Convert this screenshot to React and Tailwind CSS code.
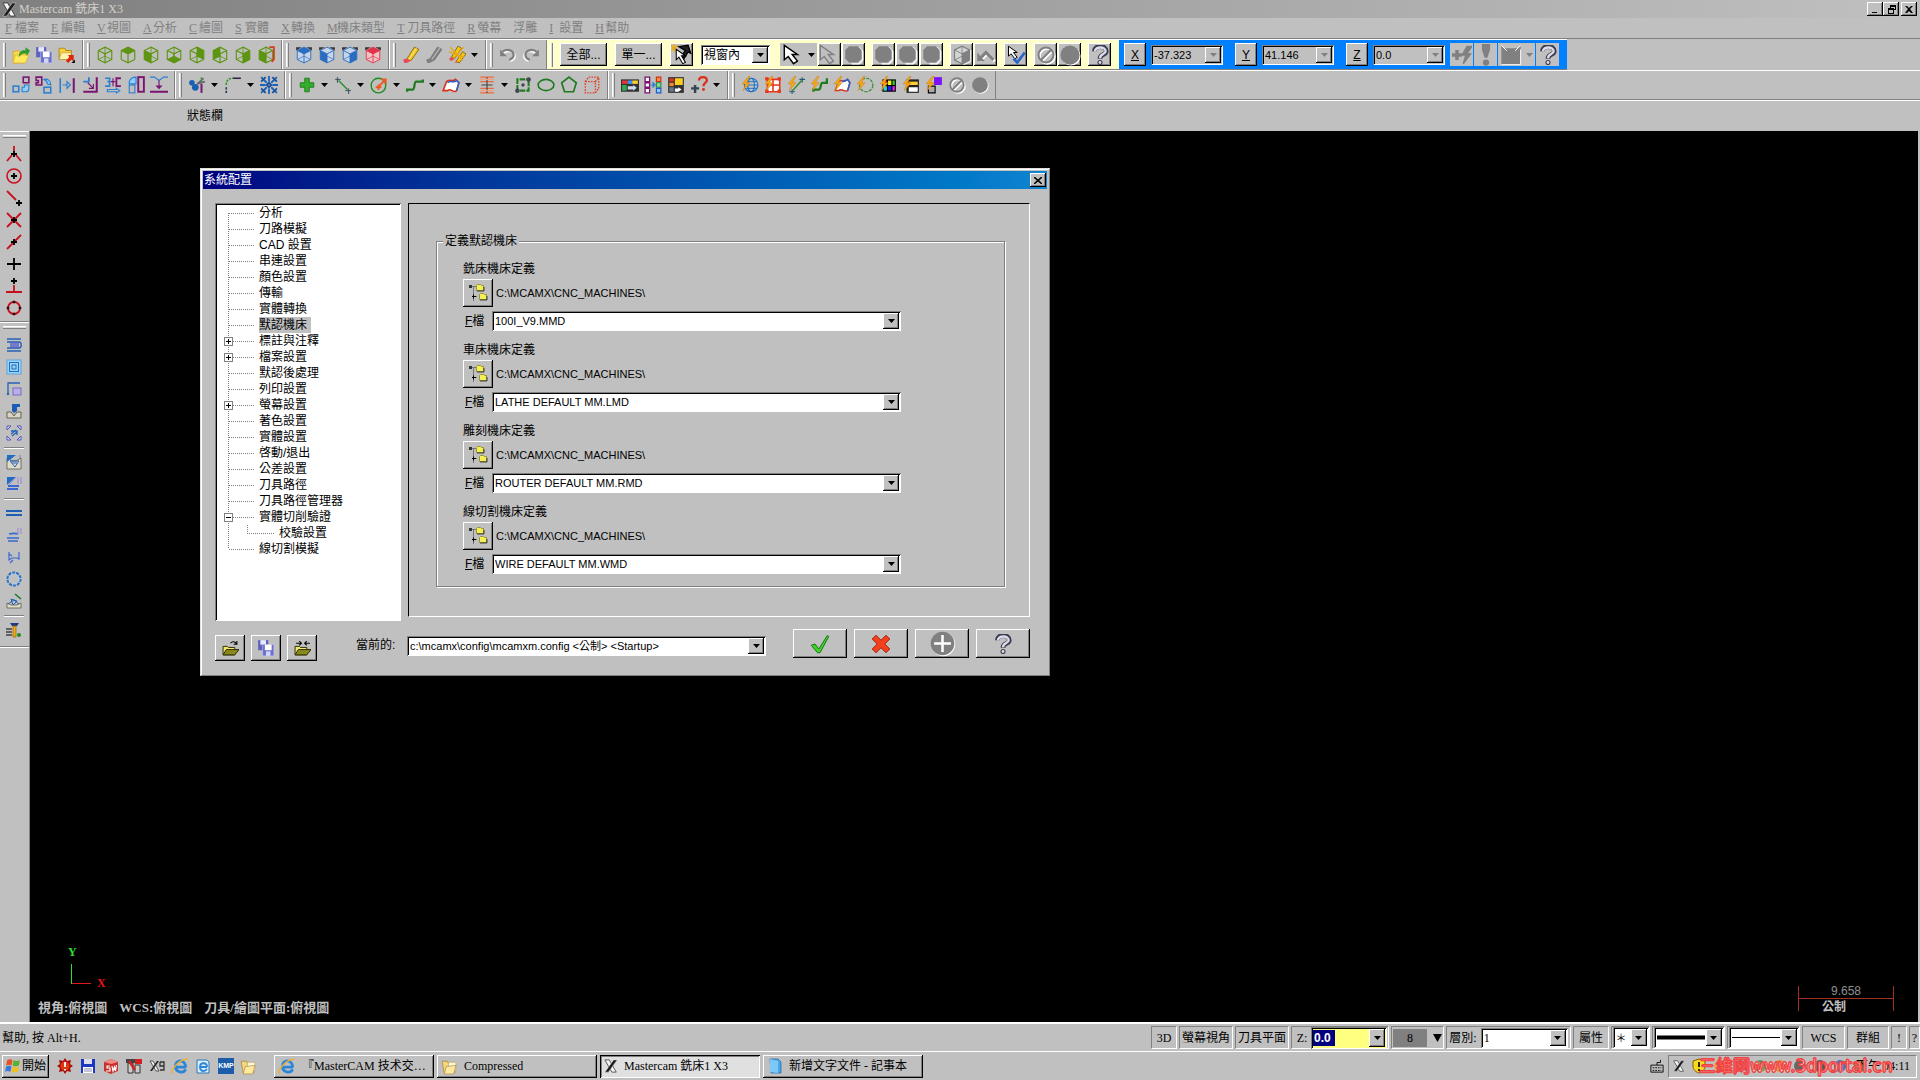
import React, { useState } from 'react';

const RAISED = 'bg-[#c0c0c0] shadow-[inset_-1px_-1px_#000,inset_1px_1px_#fff,inset_-2px_-2px_#808080]';
const SUNKEN = 'shadow-[inset_1px_1px_#808080,inset_-1px_-1px_#fff,inset_2px_2px_#000]';
const CELL = 'border border-t-[#808080] border-l-[#808080] border-r-white border-b-white';
const SANS = 'font-["Liberation_Sans","Noto_Sans_CJK_TC",sans-serif]';
const SERIF = 'font-["Liberation_Serif","Noto_Sans_CJK_TC",serif]';

const Ico = ({ size = 18, children }) => (
  <svg width={size} height={size} viewBox="0 0 16 16" fill="none" aria-hidden="true" className="shrink-0">
    {children}
  </svg>
);

const Arrow = ({ color = '#000' }) => (
  <svg width="7" height="4" viewBox="0 0 7 4" aria-hidden="true" className="shrink-0">
    <path d="M0 0h7L3.5 4z" fill={color} />
  </svg>
);

/* ---------- view cubes ---------- */
const FACES = {
  top: '8,1 14,4 8,7 2,4',
  left: '2,4 8,7 8,15 2,12',
  right: '14,4 14,12 8,15 8,7',
  bottom: '2,12 8,9 14,12 8,15',
  backRight: '8,1 14,4 14,12 8,9',
  backLeft: '8,1 2,4 2,12 8,9',
};

const Cube = ({ face, color = '#5d9410', extra }) => (
  <Ico>
    {face && <polygon points={FACES[face]} fill={color} />}
    <path d="M8 1l6 3v8l-6 3-6-3V4zM2 4l6 3 6-3M8 7v8" stroke={color} />
    {face !== 'top' && <path d="M8 1v8l-6 3M8 9l6 3" stroke={color} strokeWidth=".7" />}
    {extra && <path d="M11 1h4v11l-2 2" stroke="#d33c1c" strokeWidth="1.6" />}
  </Ico>
);

const SolidCube = ({ face, color, light }) => (
  <Ico>
    <path d="M1 1h5L1 4zM15 1h-5l5 3z" fill="#333" />
    <polygon points="8,1 14,4 14,12 8,15 2,12 2,4" fill={light} />
    <polygon points={FACES[face]} fill={color} />
    <path d="M8 1l6 3v8l-6 3-6-3V4zM2 4l6 3 6-3M8 7v8" stroke={color} strokeWidth=".8" />
    <path d="M8 9l-6 3M8 9l6 3" stroke={color} strokeWidth=".6" />
  </Ico>
);

/* ---------- file icons ---------- */
const OpenIcon = () => (
  <Ico>
    <path d="M1 5l5-1 1 2h6l-2 9H1z" fill="#f7d94a" stroke="#d9a520" strokeWidth=".7" />
    <path d="M3 8h12l-3 7H1z" fill="#ffe95c" stroke="#d9a520" strokeWidth=".5" />
    <path d="M6 10c0-5 3-7 6-6V1l4 3-3 5V7c-3-1-5 0-7 3z" fill="#2e9b2a" />
  </Ico>
);
const SaveIcon = () => (
  <Ico>
    <path d="M1 1h9v9H1z" fill="#5d62bd" /><path d="M3 1h5v4H3z" fill="#e8e8ff" />
    <path d="M5 5h10v10H5z" fill="#6a6fca" stroke="#c9cbf3" strokeWidth=".5" />
    <path d="M7 5h6v5H7z" fill="#fff" /><path d="M8 11h4v4H8z" fill="#d4d6f5" />
  </Ico>
);
const FolderRedIcon = () => (
  <Ico>
    <path d="M1 2h5l1 2h5v8H1z" fill="#f8d23a" stroke="#a77a12" strokeWidth=".7" />
    <path d="M3 6h9l-2 6H1z" fill="#fff3b0" stroke="#a77a12" strokeWidth=".4" />
    <path d="M9 8h5v6l-2-2-3 3-2-2 3-3z" fill="#e02412" /><path d="M15 12v3h-3z" fill="#000" />
  </Ico>
);
const FolderIcon = () => (
  <Ico size={17}>
    <path d="M1 3h5l1 2h6v9H3z" fill="#f4d77c" stroke="#a6843a" strokeWidth=".7" />
    <path d="M7 4h7v8H7z" fill="#fdf7d8" stroke="#b79a52" strokeWidth=".5" />
    <path d="M5 8l9-1-2 8H3z" fill="#ffe9a0" stroke="#a6843a" strokeWidth=".6" />
  </Ico>
);

/* ---------- pencils, undo ---------- */
const Pencil = ({ color = '#f3c518', tip = '#e84a5c', edge = '#7d5a00' }) => (
  <Ico><path d="M11 1l4 2-7 10-4-1z" fill={color} stroke={edge} strokeWidth=".7" /><path d="M13 2L6 12" stroke="#fff" strokeOpacity=".5" /><path d="M1 12l3-1 4 2-4 2H2z" fill={tip} /></Ico>
);
const PencilStar = () => (
  <Ico>
    <path d="M9 0l3 2-6 9-3-1zM13 5l3 2-6 8-3-1z" fill="#f3c518" stroke="#7d5a00" strokeWidth=".7" />
    <path d="M1 5l13 5M2 1l11 12M14 1L3 13" stroke="#e8a808" strokeWidth="1.2" /><path d="M1 11l2-1 3 2-4 1zM5 15l2-1h3z" fill="#e84a5c" />
  </Ico>
);
const UndoIcon = ({ flip }) => (
  <Ico>
    <g transform={flip ? 'matrix(-1 0 0 1 16 0)' : undefined}>
      <path d="M4 6c5-3 10-1 10 3 0 2-2 4-4 4" stroke="#fff" strokeWidth="2" />
      <path d="M3 5c5-3 10-1 10 3 0 2-2 4-4 4" stroke="#808080" strokeWidth="2" /><path d="M1 3v6h6z" fill="#808080" />
    </g>
  </Ico>
);

/* ---------- pointers and disabled shapes ---------- */
const Pointer = ({ fill = '#fff', stroke = '#000', size = 21 }) => (
  <Ico size={size}><path d="M1 1v11l3-2.500L8 15l3-2-4-5h4z" fill={fill} stroke={stroke} strokeWidth="1.100" /></Ico>
);
const DoublePointer = () => (
  <Ico size={21}>
    <path d="M6 2l7-1 2 6-2-1-3 5-2-2 3-4z" fill="#222" stroke="#000" />
    <path d="M0 1l5 5M0 5l5-4M2.500 0v6" stroke="#f0a800" />
    <path d="M4 4v8l2-2 3 5 2-1-3-5h3z" fill="#fff" stroke="#000" strokeWidth=".8" />
  </Ico>
);
const Blob = () => (
  <Ico size={20}>
    <path d="M5 2h7l3 3v7l-3 3H6" stroke="#fff" />
    <path d="M4 1h7l3 3v7l-3 3H4l-3-3V4z" fill="#808080" />
  </Ico>
);
const Disc = ({ size = 20 }) => (
  <Ico size={size}><circle cx="8.7" cy="8.7" r="7" fill="#fff" /><circle cx="8" cy="8" r="7" fill="#808080" /></Ico>
);
const NoIcon = ({ size = 18 }) => (
  <Ico size={size}>
    <g stroke="#fff" strokeWidth="1.6"><circle cx="9" cy="9" r="6" /><path d="M5 13l8-8" /></g>
    <g stroke="#808080" strokeWidth="1.6"><circle cx="8" cy="8" r="6" /><path d="M4 12l8-8" /></g>
  </Ico>
);
const GrayCube = () => (
  <Ico size={20}>
    <path d="M8 1l6 3v8l-6 3-6-3V4z" fill="#d4d4d4" stroke="#808080" /><path d="M8 7l6-3v8l-6 3z" fill="#808080" />
    <path d="M2 4l6 3 6-3M8 1v14M2 12l6-3" stroke="#808080" strokeWidth=".7" /><path d="M15 4v9l-6 3" stroke="#fff" strokeWidth=".7" />
  </Ico>
);
const BentArrow = () => (
  <Ico size={20}>
    <path d="M3 13l6-6 6 6" stroke="#fff" strokeWidth="2.5" /><path d="M2 12l6-6 6 6" stroke="#808080" strokeWidth="2.5" /><path d="M1 6v7h6z" fill="#808080" />
  </Ico>
);
const CheckPointer = () => (
  <Ico size={20}>
    <path d="M2 1v8l2-2 3 4 2-1-3-4h3z" fill="#fff" stroke="#000" strokeWidth=".8" />
    <path d="M6 11l3 3 6-8" stroke="#2a64c8" strokeWidth="2.2" />
  </Ico>
);
const HelpIcon = () => (
  <Ico size={20}>
    <path d="M3.500 5c0-5 9.500-5 9.500 0 0 3-5 2-5 6" stroke="#3c3c50" strokeWidth="3.800" />
    <path d="M4 5c.5-4 8.500-4 8.500 0 0 2.500-4.500 2-4.500 5.500" stroke="#dcdcec" strokeWidth="1.900" />
    <circle cx="8" cy="14" r="1.600" fill="#dcdcec" stroke="#3c3c50" strokeWidth=".9" />
  </Ico>
);

/* ---------- transform toolbar ---------- */
const B = '#2c7fd0';
const P = '#7a1470';
const X1 = () => <Ico><rect x="10" y="1" width="5" height="5" stroke={P} strokeWidth="1.4" /><rect x="1" y="9" width="5" height="5" stroke={B} strokeWidth="1.4" /><path d="M9 14v-4h2V8h4v3c0 2-1 3-3 3z" fill="#8fd0ff" stroke={B} /></Ico>;
const X2 = () => <Ico><path d="M1 1h5v7H1V6h2V4H1z" stroke={P} strokeWidth="1.4" /><path d="M8 3c3-1 6 1 6 5l-3-1c0-2-1-3-3-4z" fill="#8fd0ff" stroke={B} /><rect x="8" y="10" width="6" height="5" stroke={B} strokeWidth="1.4" /></Ico>;
const X3 = () => <Ico><path d="M2 2v13" stroke={B} strokeWidth="1.4" /><path d="M14 2v13" stroke={P} strokeWidth="1.8" /><path d="M4 8h4M8 5v6l3-3z" stroke={B} /></Ico>;
const X4 = () => <Ico><path d="M2 5h5V1" stroke={B} strokeWidth="1.6" /><path d="M14 1v13H2" stroke={P} strokeWidth="1.8" /><path d="M6 6l5 5M11 7v4H7" stroke={P} /></Ico>;
const X5 = () => <Ico><path d="M1 2h4v7H1M3 5h2" stroke={B} strokeWidth="1.4" /><path d="M15 2h-4v7h4" stroke={P} strokeWidth="1.6" /><path d="M8 2v7M6 5h4" stroke={P} /><path d="M3 12h8v-1l3 2-3 2v-1H3z" stroke={B} /></Ico>;
const X6 = () => <Ico><path d="M2 5c1-3 3-4 6-4v6H2z" stroke={B} fill="#8fd0ff" /><rect x="2" y="8" width="5" height="7" stroke={B} /><rect x="10" y="1" width="5" height="13" stroke={P} strokeWidth="1.7" /></Ico>;
const X7 = () => <Ico><path d="M0 1h4l4 3 4-3h4" stroke={B} /><path d="M8 4v7M6 9l2 2 2-2z" stroke={P} fill={P} /><path d="M0 14h16" stroke={P} strokeWidth="1.8" /></Ico>;

const TrimIcon = () => <Ico><path d="M8 7l6-5M8 7l7-2" stroke="#667" strokeWidth="1.4" /><circle cx="3.500" cy="6" r="2.500" fill="#1c5fb0" /><circle cx="6.500" cy="10" r="3" fill="#1c5fb0" /><path d="M12 7v8" stroke={P} strokeWidth="1.8" /><path d="M12 1v4" stroke="#2c9a20" strokeDasharray="2 1" strokeWidth="1.4" /></Ico>;
const FilletIcon = () => <Ico><path d="M2 15V9" stroke="#235" strokeWidth="1.4" strokeDasharray="2 1" /><path d="M2 8c0-4 2-6 6-6" stroke="#2c9a20" strokeWidth="1.4" strokeDasharray="2 1" /><path d="M8 2h7" stroke="#3a2050" strokeWidth="1.4" /></Ico>;
const BurstIcon = () => <Ico><path d="M1 1l5 5M15 1l-5 5M1 15l5-5M15 15l-5-5M8 0v5M8 11v5M0 8h5M11 8h5" stroke="#1763b8" strokeWidth="1.6" /><path d="M1 5l4-4M11 1l4 4M1 11l4 4M11 15l4-4M6 8l2-2 2 2-2 2z" stroke="#1a4f98" strokeWidth="1.6" /></Ico>;

/* ---------- sketcher ---------- */
const PlusIcon = () => <Ico><path d="M6 2h4v4h4v4h-4v4H6v-4H2V6h4z" fill="#35ad2c" stroke="#1b7a18" strokeWidth=".8" /></Ico>;
const LineIcon = () => <Ico><path d="M4 4l8 8" stroke="#2a8c2a" strokeWidth="1.3" /><path d="M1 3h5M3 1v5M10 13h5M13 11v5" stroke="#345" strokeWidth=".8" /></Ico>;
const CircleIcon = () => <Ico><circle cx="7.500" cy="8.500" r="6.500" stroke="#1f8a1f" strokeWidth="1.2" /><path d="M5 10h5M7.500 7.500v5M8 9l5-5M10 3h4v4" stroke="#ee5a1c" strokeWidth="1.6" /></Ico>;
const SplineIcon = () => <Ico><path d="M1 14v-2h5c2 0 1-7 3-7h6V3" stroke="#1f7a1f" strokeWidth="2" /></Ico>;
const SurfaceIcon = () => <Ico><path d="M1 13l3-8c3-3 5 1 8-2l3 3-2 7c-3 3-5-3-8 0z" fill="#fff" stroke="#d8311c" strokeWidth="1.4" /><path d="M5 6c3-3 5 1 8-2l2 2-2 7" stroke="#2c62c8" strokeWidth="1.4" /></Ico>;
const DraftIcon = () => <Ico><path d="M2 1h12M2 5h12M2 11h12M2 15h12" stroke="#ee6a3a" strokeWidth="1.3" /><path d="M8 1v14M3 8h10" stroke="#444" strokeWidth="1" /><path d="M2 3h12M2 13h12" stroke="#f5a080" /></Ico>;
const RectIcon = () => <Ico><path d="M3 13V3h9M13 4v9H5" stroke="#1f7a1f" strokeWidth="1.8" strokeDasharray="5 1" /><circle cx="3" cy="13" r="2" fill="#445" /><circle cx="13" cy="3" r="2" fill="#445" /><circle cx="8" cy="8" r="1.500" fill="#445" /></Ico>;
const EllipseIcon = () => <Ico><ellipse cx="8" cy="8" rx="7" ry="5" stroke="#1f7a1f" strokeWidth="1.4" /></Ico>;
const PolyIcon = () => <Ico><path d="M8 1l6.500 5-2.500 8H4L1.500 6z" stroke="#1f7a1f" strokeWidth="1.5" /></Ico>;
const BoxIcon = () => <Ico><path d="M2 5h9v10H2zM2 5l3-4h9v10l-3 4M11 5l3-4" stroke="#e2452a" strokeWidth="1.2" strokeDasharray="1.5 1" /></Ico>;

/* ---------- attribute and quick mask toolbars ---------- */
const Bolt = () => <path d="M7 0L1 7h3l-2 6 6-7H5l3-6z" fill="#f6a81c" stroke="#c97800" strokeWidth=".4" />;
const Palette1 = () => <Ico><path d="M0 3h16v11H0z" fill="#333" /><path d="M1 4h5v3H1z" fill="#e33" /><path d="M6 4h4v3H6z" fill="#39f" /><path d="M10 4h5v3h-5z" fill="#fc3" /><path d="M1 8h4v5H1z" fill="#3a5" /><path d="M6 9h5V8l3 2.500-3 2.500v-1H6z" fill="#cde" /></Ico>;
const Palette2 = () => <Ico><path d="M1 1h4v4H1zM1 6h4v4H1zM1 11h4v4H1z" fill="#fff" stroke={P} strokeWidth="1.2" /><path d="M11 1h4v4h-4z" fill="#f84" stroke="#c31" /><path d="M11 6h4v4h-4z" fill="#8d8" stroke="#285" /><path d="M11 11h4v4h-4z" fill="#8cf" stroke="#25c" /><path d="M6 8h3M8 6l2 2-2 2z" stroke={B} /></Ico>;
const Palette3 = () => <Ico><path d="M1 1h14v14H1z" fill="#333" /><path d="M2 2h4v3H2z" fill="#d32" /><path d="M7 2h7v6H7z" fill="#fc2" /><path d="M2 6h4v3H2z" fill="#e83" /><path d="M2 10h4v4H2z" fill="#678" /><path d="M7 11h3v-1l3 2-3 2H7z" fill="#fff" /></Ico>;
const QueryIcon = () => <Ico><path d="M1 11h7M4.500 8v7" stroke="#345" strokeWidth="2.2" /><path d="M8 4c0-4 7-4 7 0 0 2-3 2-3 5" stroke="#dc2d18" strokeWidth="2" /><circle cx="12" cy="12" r="1.300" fill="#dc2d18" /></Ico>;
const GlobeIcon = () => <Ico><circle cx="9" cy="8" r="6" stroke="#1b72c8" /><ellipse cx="9" cy="8" rx="3" ry="6" stroke="#1b72c8" /><path d="M3 8h12M4 5h10M4 11h10" stroke="#1b72c8" strokeWidth=".8" /><Bolt /></Ico>;
const GridIcon = () => <Ico><path d="M3 3h11v11H3z" fill="#fff" /><path d="M3 3h11v11H3zM8 3v11M3 8h11" stroke="#e8351c" strokeWidth="1.4" /><path d="M1 1h3v3H1zM12 1h3v3h-3zM1 12h3v3H1zM12 12h3v3h-3z" fill="#e8351c" /><Bolt /></Ico>;
const QLine = () => <Ico><path d="M5 13l8-9" stroke="#2a8c2a" strokeWidth="1.3" /><path d="M11 3h5M13.500 1v5M2 14h5M4.500 12v4" stroke="#257" strokeWidth=".9" /><Bolt /></Ico>;
const QSpline = () => <Ico><path d="M3 14v-2h5c2 0 1-6 3-6h4V2" stroke="#1f7a1f" strokeWidth="2" /><Bolt /></Ico>;
const QSurface = () => <Ico><path d="M2 13l3-8c3-2 5 1 8-2l2 3-2 7c-3 2-5-3-8 0z" fill="#fff" stroke="#d8311c" strokeWidth="1.3" /><path d="M8 5c2 0 3 0 5-2l2 3-2 7" stroke="#2c62c8" strokeWidth="1.4" /><Bolt /></Ico>;
const QCircle = () => <Ico><circle cx="9" cy="8" r="6" stroke="#2a8c2a" strokeDasharray="3 1" /><Bolt /></Ico>;
const QColor = () => <Ico><path d="M3 3h12v11H3z" fill="#000" /><path d="M4 4h3v4H4z" fill="#e22" /><path d="M8 4h3v4H8z" fill="#ee2" /><path d="M12 4h2v4h-2z" fill="#3c3" /><path d="M4 9h3v4H4z" fill="#2dd" /><path d="M8 9h3v4H8z" fill="#22e" /><path d="M12 9h2v4h-2z" fill="#e2e" /><Bolt /></Ico>;
const QLevel = () => <Ico><path d="M4 3h11v12H4z" fill="#222" /><path d="M6 5h8v3H6z" fill="#fc3" /><path d="M6 10h8v4H6z" fill="#fff" /><Bolt /></Ico>;
const QSquares = () => <Ico><path d="M8 1h7v7H8z" fill="#7a12f5" /><path d="M3 9h6v6H3z" fill="#aaa" stroke="#000" /><Bolt /></Ico>;

/* ---------- left bars ---------- */
const R = '#c8101c';
const Dot = ({ x = 8, y = 8 }) => <path d={`M${x - 3} ${y}h6M${x} ${y - 3}v6`} stroke="#000" strokeWidth="1.8" />;
const SNAPS = [
  ['原點', <><path d="M8 0v5M6 9l-5 6M10 9l5 6" stroke={R} strokeWidth="1.800" /><Dot /></>],
  ['圓心', <><circle cx="8" cy="8" r="7" stroke={R} strokeWidth="1.600" /><Dot /></>],
  ['端點', <><path d="M1 1l9 9" stroke={R} strokeWidth="1.800" /><Dot x={13} y={13} /></>],
  ['交點', <><path d="M1 1l14 14M15 1L1 15" stroke={R} strokeWidth="1.800" /><Dot /></>],
  ['中點', <><path d="M15 1L1 15" stroke={R} strokeWidth="1.800" /><Dot /></>],
  ['點', <path d="M8 2v12M1 8h14" stroke="#000" strokeWidth="1.800" />],
  ['垂直', <><path d="M8 7v7M0 14h16" stroke={R} strokeWidth="1.800" /><Dot y={3} /></>],
  ['四等分點', <><circle cx="8" cy="8" r="6" stroke={R} strokeWidth="1.800" /><path d="M8 .500v3M8 12.500v3M.500 8h3M12.500 8h3M6.500 2h3M6.500 14h3M2 6.500v3M14 6.500v3" stroke="#000" /></>],
];

const PATHS_A = [
  ['外形', <><path d="M1 2h14M1 14h14M1 5h12c3 0 3 6 0 6H1" stroke="#2462b8" strokeWidth="1.400" /><path d="M4 5h9v6H4z" fill="#5560c8" opacity=".700" /></>],
  ['挖槽', <><rect x="1" y="1" width="14" height="14" fill="#9ad4f8" stroke="#5aa4e0" /><rect x="3.500" y="3.500" width="9" height="9" stroke="#1c6cc0" /><rect x="6" y="6" width="4" height="4" stroke="#1c6cc0" /></>],
  ['面銑', <><path d="M2 13V2h12" stroke="#2462b8" strokeWidth="1.300" /><circle cx="2" cy="13" r="1.200" fill="#2462b8" /><rect x="7" y="7" width="8" height="7" fill="#b9aee8" stroke="#7a6cc0" /></>],
  ['鑽孔', <><path d="M6 1h8v3h-3v4L8 10 6 8z" fill="#1c5cb4" /><path d="M1 9h4l3 4 3-4h4v6H1z" fill="#d8d4c8" stroke="#66604c" /></>],
  ['陣列', <><path d="M1 1h4L1 5zM15 1v4l-4-4zM1 15v-4l4 4zM15 15h-4l4-4z" stroke="#5a54b8" fill="#cfe0ff" /><path d="M5 9l5-4M6 11l5-4M5 6h6v4" stroke="#2462b8" strokeWidth="1.300" /></>],
];
const PATHS_B = [
  ['曲面粗加工', <><path d="M1 4l5 3h4l5-3v11H1z" fill="#e0dccc" stroke="#5c5844" strokeWidth=".800" /><path d="M1 1h9L1 8z" fill="#1f6cc4" /><path d="M4 7h9l-4 6zM6 9h5" stroke="#2462b8" /><path d="M14 1v3" stroke="#8c78d0" /></>],
  ['曲面精加工', <><path d="M1 1h9L1 9z" fill="#1f6cc4" /><path d="M2 10h11M1 13h11" stroke="#3a68d0" strokeWidth="1.800" /><path d="M10 1L3 9M12 1v7M15 1v7" stroke="#9a84d8" /></>],
];
const PATHS_C = [
  ['平行', <path d="M0 6h16M0 10h16" stroke="#1b5fb4" strokeWidth="1.800" />],
  ['流線', <><path d="M3 7c4-1 6-1 9 0M1 11h12M2 14h10" stroke="#3a68d0" strokeWidth="1.700" /><path d="M12 1v6M15 1v6" stroke="#9a84d8" /></>],
  ['直紋', <path d="M3 3v8l3-2h5l2 1V3M3 5l3 2M4 14l3-3" stroke="#3a68d0" strokeWidth="1.200" />],
  ['全圓', <><circle cx="8" cy="8" r="6.500" stroke="#2f74c8" strokeWidth="2.200" strokeDasharray="3 1" /><circle cx="8" cy="8" r="5" stroke="#b4d4f4" strokeDasharray="2 2" /></>],
  ['五軸', <><path d="M1 10l4 2h6l4-2v5H1z" fill="#e0dccc" stroke="#5c5844" strokeWidth=".800" /><path d="M5 6l6 2-4 4zM2 11l6-4 5 4" stroke="#2462b8" /><path d="M9 1l6 5" stroke="#157a2a" strokeWidth="1.600" /></>],
];
const PATHS_D = [
  ['管理', <><path d="M4 1h9l-2 3H6z" fill="#223a80" /><path d="M7 4h3v11H7z" fill="#f0a818" stroke="#8a5c00" strokeWidth=".600" /><path d="M0 7h6M0 10h6M0 13h6" stroke="#000" strokeWidth="1.200" /><circle cx="13" cy="13" r="2" fill="#208a20" /></>],
];

const MENUS = [
  ['F', '檔案'], ['E', '編輯'], ['V', '視圖'], ['A', '分析'], ['C', '繪圖'], ['S', '實體'], ['X', '轉換'],
  ['M', '機床類型'], ['T', '刀具路徑'], ['R', '螢幕'], ['', '浮雕'], ['I', '設置'], ['H', '幫助'],
];

const TREE = [
  { label: '分析' }, { label: '刀路模擬' }, { label: 'CAD 設置' }, { label: '串連設置' }, { label: '顏色設置' },
  { label: '傳輸' }, { label: '實體轉換' }, { label: '默認機床' }, { label: '標註與注釋', box: '+' },
  { label: '檔案設置', box: '+' }, { label: '默認後處理' }, { label: '列印設置' }, { label: '螢幕設置', box: '+' },
  { label: '著色設置' }, { label: '實體設置' }, { label: '啓動/退出' }, { label: '公差設置' }, { label: '刀具路徑' },
  { label: '刀具路徑管理器' }, { label: '實體切削驗證', box: '-' }, { label: '校驗設置', child: true }, { label: '線切割模擬' },
];

const MACHINES = [
  { id: 'mill', title: '銑床機床定義', file: '100I_V9.MMD' },
  { id: 'lathe', title: '車床機床定義', file: 'LATHE DEFAULT MM.LMD' },
  { id: 'router', title: '雕刻機床定義', file: 'ROUTER DEFAULT MM.RMD' },
  { id: 'wire', title: '線切割機床定義', file: 'WIRE DEFAULT MM.WMD' },
];

/* ---------- toolbar parts ---------- */
const Handle = () => <span className="ml-[3px] mr-[3px] h-6 w-[3px] shrink-0 border-l border-r border-l-white border-r-[#808080] bg-[#dcdcdc]" />;

const Bar = ({ first, children }) => (
  <div className={`flex shrink-0 items-center border-r border-r-[#808080] pr-1 ${first ? '' : 'border-l border-l-white'}`}>
    <Handle />
    {children}
  </div>
);

const Tool = ({ label, drop, children }) => (
  <>
    <button type="button" aria-label={label} className="flex h-6 w-[23px] shrink-0 items-center justify-center">{children}</button>
    {drop && (
      <button type="button" aria-label={`${label} 選項`} className="flex h-6 w-[13px] shrink-0 items-center justify-center"><Arrow /></button>
    )}
  </>
);

const Push = ({ label, className = 'h-[23px] w-[23px]', children }) => (
  <button type="button" aria-label={label} className={`flex shrink-0 items-center justify-center ${RAISED} ${className}`}>{children}</button>
);

const Combo = ({ id, label, value, className = '', textClass = 'text-[11px] bg-white', arrow = '#000' }) => (
  <div className={`flex min-w-0 items-stretch p-[2px] ${SUNKEN} ${className}`}>
    <select id={id} aria-label={label} defaultValue={value} className={`min-w-0 flex-1 appearance-none overflow-hidden pl-px outline-none ${textClass}`}>
      <option>{value}</option>
    </select>
    <span className={`flex w-4 shrink-0 items-center justify-center ${RAISED}`}><Arrow color={arrow} /></span>
  </div>
);

const AxisField = ({ axis, value }) => (
  <div className="flex items-center gap-[5px]">
    <button type="button" className={`h-[23px] w-[22px] text-[12px] underline ${RAISED}`}>{axis}</button>
    <Combo label={axis} value={value} className="h-5 w-[72px] bg-[#c0c0c0]" textClass="text-[11px] bg-[#c0c0c0]" arrow="#808080" />
  </div>
);

const SideTools = ({ items }) => items.map(([label, art]) => (
  <button key={label} type="button" aria-label={label} className="flex h-[22px] w-7 items-center justify-center"><Ico size={16}>{art}</Ico></button>
));

const SideRule = () => <div className="mt-[3px] mb-[2px] ml-1 h-[2px] w-5 border-t border-b border-t-[#808080] border-b-white" />;
const SideHandle = () => <div className="mt-[3px] mb-[5px] ml-[3px] h-[3px] w-[23px] border-t border-b border-t-white border-b-[#808080] bg-[#dcdcdc]" />;

/* ---------- dialog ---------- */
const Branch = ({ item, first, last }) => (
  <svg width={item.child ? 62 : 42} height="16" aria-hidden="true" className="shrink-0">
    <g stroke="#808080" strokeDasharray="1 1">
      <path d={first ? 'M11.500 8v8' : last ? 'M11.500 0v8' : 'M11.500 0v16'} />
      {item.child ? <path d="M30.500 0v8M30 8.500h27" /> : <path d="M12 8.500h26" />}
    </g>
    {item.box && (
      <>
        <rect x="7.500" y="4.500" width="8" height="8" fill="#fff" stroke="#808080" />
        <path d={item.box === '+' ? 'M9 8.500h5M11.500 6v5' : 'M9 8.500h5'} stroke="#000" />
      </>
    )}
  </svg>
);

const TreeButtonIcon = () => (
  <svg width="20" height="20" viewBox="0 0 20 20" fill="none" aria-hidden="true">
    <path d="M3 3.500h5M5.500 4v14M5 13.500h4" stroke="#777" />
    <path d="M1 2h3v3H1z" fill="#333" /><path d="M4 13.500h4M5.500 11.500v4" stroke="#000" />
    <path d="M8.500 2.500l1-1h3l1 1h2v5h-7zM11.500 11.500l1-1h3l1 1h2v5h-7z" fill="#f4ee58" stroke="#8a8420" strokeWidth=".800" />
    <path d="M9 8h7V4M12 17h7v-4" stroke="#222" strokeWidth=".800" />
  </svg>
);

const DarkFolder = ({ merge }) => (
  <Ico size={17}>
    <path d="M1 6h4l1 1h6v7H1z" fill="#f2e96a" stroke="#2a2a00" strokeWidth=".900" />
    <path d="M4 9h12l-4 5H1z" fill="#8a8a1c" stroke="#2a2a00" strokeWidth=".900" />
    {merge ? <path d="M2 3h5M5 1l2 2-2 2M15 3h-5M12 1l-2 2 2 2" stroke="#000" /> : <path d="M8 3c2-2 4-2 6 1M14 1v3h-3" stroke="#000" />}
  </Ico>
);

const BigButton = ({ label, children }) => (
  <button type="button" aria-label={label} className={`flex h-[29px] w-[54px] items-center justify-center ${RAISED}`}>{children}</button>
);

const ConfigDialog = () => {
  const [selected, setSelected] = useState('默認機床');
  return (
    <section role="dialog" aria-label="系統配置" className={`absolute top-[37px] left-[170px] w-[850px] bg-[#c0c0c0] p-[3px] text-[12px] leading-4 text-black shadow-[inset_1px_1px_#dfdfdf,inset_-1px_-1px_#808080,inset_2px_2px_#fff] ${SANS}`}>
      <header className="flex h-[18px] items-center justify-between bg-linear-to-r from-[#000080] to-[#1084d0] pr-px pl-px text-white">
        <h1>系統配置</h1>
        <button type="button" aria-label="關閉" className={`flex h-[14px] w-4 items-center justify-center ${RAISED}`}>
          <svg width="8" height="7" viewBox="0 0 8 7" aria-hidden="true"><path d="M0 0l8 7M8 0L0 7" stroke="#000" strokeWidth="1.600" /></svg>
        </button>
      </header>

      <div className="pt-[14px] pr-[17px] pb-3 pl-3">
        <div className="flex items-start gap-[7px]">
          <ul className={`h-[418px] w-[186px] shrink-0 bg-white p-[2px] ${SUNKEN}`}>
            {TREE.map((item, i) => (
              <li key={item.label} className="flex h-4 items-center">
                <Branch item={item} first={i === 0} last={i === TREE.length - 1} />
                <button
                  type="button"
                  onClick={() => setSelected(item.label)}
                  className={`h-4 whitespace-nowrap ${selected === item.label ? 'bg-[#c0c0c0] pr-1' : ''}`}
                >
                  {item.label}
                </button>
              </li>
            ))}
          </ul>

          <div className="h-[414px] flex-1 border border-t-black border-l-black border-r-white border-b-white pt-[29px] pr-6 pl-[27px]">
            <fieldset className="border border-[#808080] pt-3 pr-[103px] pb-3 pl-[26px] shadow-[1px_1px_#fff,inset_1px_1px_#fff]">
              <legend className="-ml-[20px] bg-[#c0c0c0] px-[2px]">定義默認機床</legend>
              <div className="flex flex-col gap-[11px]">
                {MACHINES.map((m) => (
                  <div key={m.id}>
                    <p>{m.title}</p>
                    <div className="mt-[2px] flex items-center gap-[3px]">
                      <button type="button" aria-label={`${m.title} 瀏覽`} className={`flex h-7 w-[30px] items-center justify-center ${RAISED}`}>
                        <TreeButtonIcon />
                      </button>
                      <span className="text-[11px]">C:\MCAMX\CNC_MACHINES\</span>
                    </div>
                    <div className="mt-1 flex items-center">
                      <label htmlFor={m.id} className="w-[29px] pl-[2px] whitespace-nowrap"><u>F</u>檔</label>
                      <Combo id={m.id} value={m.file} className="h-5 flex-1 bg-white" />
                    </div>
                  </div>
                ))}
              </div>
            </fieldset>
          </div>
        </div>

        <footer className="mt-2 flex items-start">
          <div className="mt-[6px] flex gap-[6px]">
            <Push label="開啟" className="h-[26px] w-[30px]"><DarkFolder /></Push>
            <Push label="儲存" className="h-[26px] w-[30px]"><SaveIcon /></Push>
            <Push label="合併" className="h-[26px] w-[30px]"><DarkFolder merge /></Push>
          </div>
          <label htmlFor="current" className="mt-2 ml-[39px] w-[51px]">當前的:</label>
          <Combo id="current" value="c:\mcamx\config\mcamxm.config <公制> <Startup>" className="mt-[7px] h-5 w-[359px] bg-white" />
          <div className="ml-auto flex gap-[7px]">
            <BigButton label="確定"><Ico size={20}><path d="M1 9l3-1 3 4 7-11 1 1-7 13H6z" fill="#3fd02c" stroke="#167a10" strokeWidth=".800" /></Ico></BigButton>
            <BigButton label="取消"><Ico size={20}><path d="M4 1l4 4 4-4 3 3-4 4 4 4-3 3-4-4-4 4-3-3 4-4-4-4z" fill="#f2401c" stroke="#a81c08" strokeWidth=".800" /></Ico></BigButton>
            <BigButton label="套用"><Ico size={27}><circle cx="8.500" cy="8.500" r="7" fill="#fff" /><circle cx="8" cy="8" r="7" fill="#808080" /><path d="M8 3v10M3 8h10" stroke="#fff" strokeWidth="1.500" /></Ico></BigButton>
            <BigButton label="說明"><HelpIcon /></BigButton>
          </div>
        </footer>
      </div>
    </section>
  );
};

/* ---------- taskbar ---------- */
const XLogo = ({ size = 18 }) => (
  <Ico size={size}><path d="M1 1h5l8 14H9z" fill="#f4f4f4" stroke="#222" strokeWidth=".800" /><path d="M11 1h4L5 15H1z" fill="#1c1c1c" stroke="#ddd" strokeWidth=".500" /></Ico>
);
const IeIcon = () => (
  <Ico><path d="M13.500 9H4.500M13 9c0-7-9-7-9-1s7 7 9 3" stroke="#2c86d8" strokeWidth="2.600" /><path d="M1 15C-1 11 9 1 15 2" stroke="#f0b030" strokeWidth="1.300" /></Ico>
);
const QUICK = [
  ['警示', <><path d="M8 0l2 3 4-1-1 4 3 2-3 2 1 4-4-1-2 3-2-3-4 1 1-4-3-2 3-2-1-4 4 1z" fill="#a80c0c" /><circle cx="8" cy="8" r="4.500" fill="#e03810" /><path d="M8 4v5M8 11v1.500" stroke="#fff" strokeWidth="1.800" /></>],
  ['磁碟', <><path d="M1 1h14v14H1z" fill="#1c38c0" /><path d="M4 1h8v5H4z" fill="#dde" /><path d="M3 9h10v6H3z" fill="#fff" /><path d="M4 11h8M4 13h8" stroke="#88a" /></>],
  ['SolidWorks', <><path d="M1 4l7-3 7 3v9l-7 3-7-3z" fill="#c8302c" /><path d="M1 4l7-3 7 3-7 2z" fill="#f08c84" /><path d="M7 8H4v2h3v3H3M9 8l1 5 1.500-4 1 4 1-6" stroke="#fff" strokeWidth="1.200" /></>],
  ['量測', <><path d="M0 1h16v4H0z" fill="#444" /><path d="M9 1h7v5H9z" fill="#d02020" /><path d="M2 5h5v10H2zM9 7h5v8H9z" fill="#ccc" stroke="#333" /><path d="M3 3l6 9" stroke="#d02020" strokeWidth="2.400" /></>],
  ['X9', <><path d="M1 3h3l6 10H7z" fill="#eee" stroke="#222" strokeWidth=".700" /><path d="M8 3h2L3 13H1z" fill="#222" /><path d="M11 4h4v8h-4M11 4v4h4" stroke="#333" strokeWidth="1.300" /></>],
];

const TaskButton = ({ active, icon, children }) => (
  <button
    type="button"
    className={`flex h-[23px] w-[160px] items-center gap-[6px] pl-1 text-[12px] whitespace-nowrap ${active ? 'bg-[#e0e0e0] shadow-[inset_1px_1px_#000,inset_-1px_-1px_#fff,inset_2px_2px_#808080]' : RAISED}`}
  >
    {icon}
    <span className="truncate">{children}</span>
  </button>
);

const TRAY_DOTS = ['#f0a030', '#d04060', '#30a040', '#f08020', '#505050', '#404040', '#3060c0', '#60a030'];

const Cell = ({ className = '', children }) => (
  <div className={`flex h-[23px] shrink-0 items-center justify-center whitespace-nowrap ${CELL} ${className}`}>{children}</div>
);

const App = () => (
  <div className={`flex min-h-screen flex-col overflow-hidden bg-[#c0c0c0] text-[12px] leading-4 text-black ${SERIF}`}>
    <header className="flex h-[18px] items-center justify-between bg-linear-to-r from-[#808080] to-[#c0c0c0] pr-[3px] pl-[2px]">
      <div className="flex items-center gap-[2px] text-[12px] text-[#d4d0c8]"><XLogo size={15} />Mastercam 銑床1 X3</div>
      <div className="flex">
        {['M1 7h5v1H1z', 'M3 0h6v5H7v4H1V3h2zM4 2v1h3v1h1V2zM2 5v3h4V5z', 'M0 1h2l2 2 2-2h2L5 4l3 4H6L4 6 2 8H0l3-4z'].map((d, i) => (
          <button key={d} type="button" aria-label={['最小化', '還原', '關閉'][i]} className={`flex h-[14px] w-4 items-center justify-center ${RAISED} ${i === 2 ? 'ml-[2px]' : ''}`}>
            <svg width="9" height="9" aria-hidden="true"><path d={d} fillRule="evenodd" /></svg>
          </button>
        ))}
      </div>
    </header>

    <nav className="flex h-5 items-center gap-3 pl-[5px] text-[#808080]">
      {MENUS.map(([key, label]) => (
        <button key={label} type="button" className="flex whitespace-nowrap">
          {key && <span className="w-[10px] text-left underline">{key}</span>}
          {label}
        </button>
      ))}
    </nav>

    <div className="flex h-8 border-t border-[#808080]">
      <div className="flex border-t border-b border-t-white border-b-[#808080]">
        <Bar first><Tool label="開啟"><OpenIcon /></Tool><Tool label="儲存"><SaveIcon /></Tool><Tool label="轉換檔案"><FolderRedIcon /></Tool></Bar>
        <Bar>
          <Tool label="等角視圖"><Cube /></Tool><Tool label="俯視圖"><Cube face="top" /></Tool><Tool label="前視圖"><Cube face="left" /></Tool>
          <Tool label="底視圖"><Cube face="bottom" /></Tool><Tool label="後視圖"><Cube face="backRight" /></Tool><Tool label="左視圖"><Cube face="backLeft" /></Tool>
          <Tool label="右視圖"><Cube face="right" /></Tool><Tool label="旋轉視圖"><Cube face="left" extra /></Tool>
        </Bar>
        <Bar>
          <Tool label="平面 俯"><SolidCube face="top" color="#2a6cc0" light="#c6d4e8" /></Tool><Tool label="平面 前"><SolidCube face="left" color="#2a6cc0" light="#c6d4e8" /></Tool>
          <Tool label="平面 右"><SolidCube face="right" color="#2a6cc0" light="#c6d4e8" /></Tool><Tool label="平面 自訂"><SolidCube face="top" color="#e0344c" light="#f0c4c4" /></Tool>
        </Bar>
        <Bar><Tool label="刪除"><Pencil /></Tool><Tool label="恢復刪除"><Pencil color="#808080" tip="#808080" edge="#707070" /></Tool><Tool label="刪除重複" drop><PencilStar /></Tool></Bar>
        <Bar><Tool label="復原"><UndoIcon /></Tool><Tool label="重做"><UndoIcon flip /></Tool></Bar>

        <div className="flex shrink-0 items-center bg-[#ffffcc] pr-2">
          <Handle />
          <div className={`ml-1 flex items-center gap-2 ${SANS}`}>
            <button type="button" className={`h-[23px] w-[47px] ${RAISED}`}>全部...</button>
            <button type="button" className={`h-[23px] w-[47px] ${RAISED}`}>單一...</button>
            <Push label="驗證選取"><DoublePointer /></Push>
            <Combo label="選取方式" value="視窗內" className="h-5 w-[69px] bg-white" textClass="text-[12px] bg-white" />
            <div className="ml-[2px] flex gap-px">
              <button type="button" aria-label="選取" className="flex h-[23px] w-[37px] items-center justify-center gap-1 bg-[#c0c0c0]"><Pointer /><Arrow /></button>
              <Push label="選取實體"><Pointer fill="#c0c0c0" stroke="#808080" /></Push>
              <Push label="實體"><Blob /></Push>
            </div>
            <div className="-ml-px flex gap-px"><Push label="邊界"><Blob /></Push><Push label="面"><Blob /></Push><Push label="主體"><Blob /></Push></div>
            <div className="-ml-px flex gap-px"><Push label="背面"><GrayCube /></Push><Push label="上一個"><BentArrow /></Push></div>
            <div className="-ml-px flex"><Push label="確認選取"><CheckPointer /></Push></div>
            <div className="-ml-px flex gap-px"><Push label="取消選取"><NoIcon size={20} /></Push><Push label="結束選取"><Disc size={22} /></Push></div>
            <div className="-ml-px flex"><Push label="選取說明"><HelpIcon /></Push></div>
          </div>
        </div>

        <div className={`flex shrink-0 items-center bg-[#0080ff] pr-2 pl-[5px] ${SANS}`}>
          <div className="flex gap-3">
            <AxisField axis="X" value="-37.323" />
            <AxisField axis="Y" value="41.146" />
            <AxisField axis="Z" value="0.0" />
          </div>
          <div className="ml-[5px] flex gap-px">
            <button type="button" aria-label="快速繪點" className="flex h-[23px] w-[23px] items-center justify-center bg-[#c0c0c0]"><Ico size={20}><path d="M0 8h8M4 4v8" stroke="#808080" strokeWidth="2.800" /><path d="M12 1L8 8h3l-2 7 6-8h-3l4-6z" fill="#808080" stroke="#808080" /></Ico></button>
            <button type="button" aria-label="更新" className="flex h-[23px] w-[23px] items-center justify-center bg-[#c0c0c0]"><Ico size={22}><path d="M5 0h6v4L9 10H7L5 4z" fill="#808080" /><circle cx="8" cy="13.500" r="2.300" fill="#808080" /></Ico></button>
            <button type="button" aria-label="設定" className="flex h-[23px] w-[37px] items-center justify-center gap-1 bg-[#c0c0c0]"><Ico size={22}><path d="M1 1l2 2h10l2-2v14H1z" fill="#808080" /><path d="M1 1l4 4M15 1l-4 4M15 4v11H1" stroke="#fff" strokeWidth=".700" /></Ico><Arrow color="#808080" /></button>
            <button type="button" aria-label="座標說明" className="flex h-[23px] w-[23px] items-center justify-center bg-[#c0c0c0]"><HelpIcon /></button>
          </div>
        </div>
      </div>
    </div>

    <div className="flex h-[30px] border-t border-b border-t-white border-b-[#808080]">
      <Bar first>
        <Tool label="平移"><X1 /></Tool><Tool label="旋轉"><X2 /></Tool><Tool label="鏡像"><X3 /></Tool><Tool label="補正"><X4 /></Tool>
        <Tool label="投影"><X5 /></Tool><Tool label="比例"><X6 /></Tool><Tool label="纏繞"><X7 /></Tool>
      </Bar>
      <Bar><Tool label="修剪" drop><TrimIcon /></Tool><Tool label="倒圓角" drop><FilletIcon /></Tool><Tool label="打斷"><BurstIcon /></Tool></Bar>
      <Bar>
        <Tool label="繪點" drop><PlusIcon /></Tool><Tool label="直線" drop><LineIcon /></Tool><Tool label="圓弧" drop><CircleIcon /></Tool>
        <Tool label="曲線" drop><SplineIcon /></Tool><Tool label="曲面" drop><SurfaceIcon /></Tool><Tool label="標註" drop><DraftIcon /></Tool>
        <Tool label="矩形"><RectIcon /></Tool><Tool label="橢圓"><EllipseIcon /></Tool><Tool label="多邊形"><PolyIcon /></Tool><Tool label="邊界盒"><BoxIcon /></Tool>
      </Bar>
      <Bar><Tool label="屬性"><Palette1 /></Tool><Tool label="層別"><Palette2 /></Tool><Tool label="顏色"><Palette3 /></Tool><Tool label="查詢" drop><QueryIcon /></Tool></Bar>
      <Bar>
        <Tool label="全部圖素"><GlobeIcon /></Tool><Tool label="點遮罩"><GridIcon /></Tool><Tool label="線遮罩"><QLine /></Tool><Tool label="曲線遮罩"><QSpline /></Tool>
        <Tool label="曲面遮罩"><QSurface /></Tool><Tool label="圓弧遮罩"><QCircle /></Tool><Tool label="顏色遮罩"><QColor /></Tool><Tool label="層別遮罩"><QLevel /></Tool>
        <Tool label="結果"><QSquares /></Tool><Tool label="清除遮罩"><NoIcon /></Tool><Tool label="停止"><Disc size={18} /></Tool>
      </Bar>
    </div>

    <div className={`flex h-[31px] items-center border-t border-white pl-[187px] ${SANS}`}>狀態欄</div>

    <main className="flex flex-1">
      <aside className="flex w-[30px] shrink-0 flex-col border-r border-r-[#808080]">
        <div className="border-t border-b border-t-white border-b-[#808080] pb-[2px]">
          <SideHandle />
          <SideTools items={SNAPS} />
        </div>
        <div className="border-t border-b border-t-white border-b-[#808080] pb-[5px]">
          <SideHandle />
          <SideTools items={PATHS_A} />
          <SideRule />
          <SideTools items={PATHS_B} />
          <SideRule />
          <SideTools items={PATHS_C} />
          <SideRule />
          <SideTools items={PATHS_D} />
        </div>
        <div className="border-t border-white" />
      </aside>

      <div className="relative mr-[2px] flex-1 overflow-hidden bg-black">
        <ConfigDialog />

        <svg width="80" height="60" className="absolute bottom-6 left-[30px]" aria-label="座標軸">
          <text x="8" y="18" fill="#2ee02e" fontSize="12" fontWeight="bold" fontFamily="Liberation Serif, serif">Y</text>
          <text x="37" y="49" fill="#e01818" fontSize="12" fontWeight="bold" fontFamily="Liberation Serif, serif">X</text>
          <path d="M11.500 26v20" stroke="#2ee02e" />
          <path d="M12 45.500h19" stroke="#e01818" />
        </svg>
        <div className="absolute bottom-[6px] left-2 flex gap-3 text-[13px] font-bold whitespace-nowrap text-[#c0c0c0]">
          <span>視角:俯視圖</span>
          <span>WCS:俯視圖</span>
          <span>刀具/繪圖平面:俯視圖</span>
        </div>

        <div className="absolute right-6 bottom-[7px] w-[96px]">
          <p className={`text-center text-[12px] text-[#909090] ${SANS}`}>9.658</p>
          <svg width="96" height="25" className="absolute top-[3px] left-0" aria-hidden="true">
            <path d="M.500 0v25M95.500 0v25M0 12.500h96" stroke="#a03020" />
          </svg>
          <p className={`pr-6 text-center font-bold text-[#c0c0c0] ${SANS}`}>公制</p>
        </div>
      </div>
    </main>

    <div className="flex h-[29px] items-center border-t-2 border-t-white pl-[2px]">
      <span className="whitespace-nowrap">幫助, 按 Alt+H.</span>
      <div className="ml-auto flex items-center gap-[2px]">
        <Cell className="w-[26px]">3D</Cell>
        <Cell className="w-[54px]">螢幕視角</Cell>
        <Cell className="w-[54px]">刀具平面</Cell>
        <Cell className="w-[98px]">
          <label htmlFor="z-depth" className="w-[18px] text-center">Z:</label>
          <div className={`flex h-[22px] w-[76px] items-stretch bg-[#ffff80] p-[2px] ${SUNKEN}`}>
            <div className="flex min-w-0 flex-1 items-center">
              <input id="z-depth" defaultValue="0.0" className={`w-[22px] bg-[#000080] pl-px font-bold text-white outline-none ${SANS}`} />
            </div>
            <span className={`flex w-4 shrink-0 items-center justify-center ${RAISED}`}><Arrow /></span>
          </div>
        </Cell>
        <Cell className="w-[53px] gap-[6px]">
          <button type="button" className="h-[18px] w-[34px] bg-[#808080]">8</button>
          <svg width="9" height="8" aria-hidden="true"><path d="M0 0h9L4.500 8z" /></svg>
        </Cell>
        <Cell className="w-[125px] gap-1">
          <label htmlFor="level">層別:</label>
          <Combo id="level" value="1" className="h-5 w-[87px] bg-white" textClass="text-[12px] bg-white" />
        </Cell>
        <Cell className="w-[36px]">屬性</Cell>
        <Cell className="w-[39px]">
          <Combo label="點型式" value="＊" className="h-[21px] w-[36px] bg-white" textClass="text-[11px] bg-white" />
        </Cell>
        {[4, 1].map((weight) => (
          <Cell key={weight} className="w-[73px]">
            <div className={`flex h-[21px] w-[70px] items-stretch bg-white p-[2px] ${SUNKEN}`}>
              <button type="button" aria-label={weight === 4 ? '線寬' : '線型'} className="flex flex-1 items-center px-px">
                <svg width="48" height="5" aria-hidden="true"><path d="M0 2.500h48" stroke="#000" strokeWidth={weight} /></svg>
              </button>
              <span className={`flex w-4 shrink-0 items-center justify-center ${RAISED}`}><Arrow /></span>
            </div>
          </Cell>
        ))}
        <Cell className="w-[43px]">WCS</Cell>
        <Cell className="w-[42px]">群組</Cell>
        <Cell className="w-[16px]">!</Cell>
        <Cell className="w-[11px]">?</Cell>
      </div>
    </div>

    <footer className="flex h-[29px] items-center border-t border-t-white pl-[2px]">
      <button type="button" className={`flex h-[23px] w-[47px] items-center gap-px pl-[2px] whitespace-nowrap ${RAISED}`}>
        <Ico size={17}>
          <path d="M3 2c2-1 3-1 5 0L7 7C5 6 4 6 2 7z" fill="#e85020" /><path d="M9 2c2 1 4 1 6 0l-1 5c-2 1-4 1-6 0z" fill="#58b030" />
          <path d="M2 8c2-1 3-1 5 0l-1 5c-2-1-3-1-5 0z" fill="#3878d8" /><path d="M8 8c2 1 4 1 6 0l-1 5c-2 1-4 1-6 0z" fill="#f0c020" />
        </Ico>
        開始
      </button>
      <div className="ml-1 flex">
        {QUICK.map(([label, art]) => <Tool key={label} label={label}><Ico size={16}>{art}</Ico></Tool>)}
        <Tool label="Internet Explorer"><IeIcon /></Tool>
        <Tool label="郵件"><Ico size={16}><path d="M2 2h10l2 2v11H2z" fill="#d8ecfa" stroke="#2878b8" /><path d="M12 9H5M12 9c0-5-7-5-7 0s5 5 7 2" stroke="#2c86d8" strokeWidth="1.800" /></Ico></Tool>
        <button type="button" className={`mt-1 mr-[3px] ml-1 flex h-4 w-4 items-center justify-center bg-[#1c5ca8] text-[7px] font-bold text-white ${SANS}`}>KMP</button>
        <Tool label="資料夾"><FolderIcon /></Tool>
      </div>
      <div className="ml-[14px] flex gap-[3px]">
        <TaskButton icon={<IeIcon />}>『MasterCAM 技术交流...</TaskButton>
        <TaskButton icon={<FolderIcon />}>Compressed</TaskButton>
        <TaskButton active icon={<XLogo size={14} />}>Mastercam 銑床1 X3</TaskButton>
        <TaskButton icon={<Ico size={16}><path d="M3 1h8l3 3v11H4z" fill="#48a8e8" stroke="#2060a0" strokeWidth=".700" /><path d="M3 1v13l8 1V3z" fill="#7cc8f8" /></Ico>}>新增文字文件 - 記事本</TaskButton>
      </div>
      <div className="mr-[3px] ml-auto flex items-center gap-1">
        <Ico size={14}><path d="M1 7h14v8H1z" stroke="#000" /><path d="M3 10h10M3 13h10" stroke="#000" strokeDasharray="2 1" /><path d="M8 7V4h4V1" stroke="#000" /></Ico>
        <div className={`relative flex h-[23px] w-[249px] items-center gap-[6px] pl-1 ${CELL}`}>
          <XLogo size={12} />
          <Ico size={16}><path d="M8 1l6 2v5c0 4-3 6-6 7-3-1-6-3-6-7V3z" fill="#f8d820" stroke="#806000" /><path d="M8 4v5M8 11v2" stroke="#000" strokeWidth="1.600" /></Ico>
          {TRAY_DOTS.map((c) => (
            <svg key={c} width="14" height="14" aria-hidden="true"><circle cx="7" cy="7" r="6" fill={c} opacity=".800" /></svg>
          ))}
          <time className="absolute right-[6px] whitespace-nowrap">下午 04:11</time>
          <span className='absolute left-[30px] text-[17px] leading-5 whitespace-nowrap text-white font-["DejaVu_Sans","Noto_Sans_CJK_SC",sans-serif] [-webkit-text-stroke:1px_#f04040] [text-shadow:1px_0_#f04040,-1px_0_#f04040,0_1px_#f04040,0_-1px_#f04040]'>
            三维网www.3dportal.cn
          </span>
        </div>
      </div>
    </footer>
  </div>
);

export default App;
